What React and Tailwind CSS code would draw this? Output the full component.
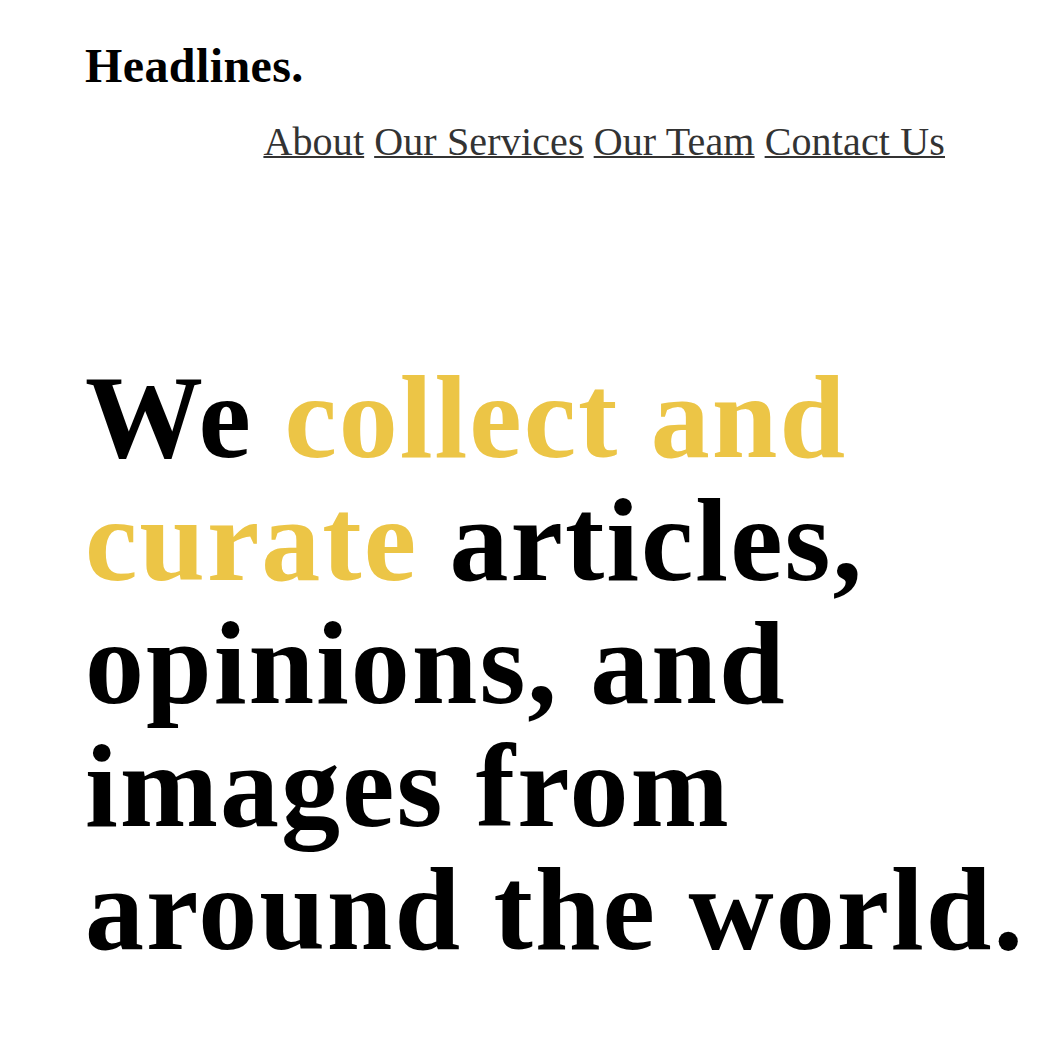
export default function App() {
  const serif = { fontFamily: '"Liberation Serif", "Times New Roman", serif' };
  return (
    <div className="min-h-[1046px] bg-white" style={serif}>
      <header className="pl-[85px] pr-[103px] pt-[42px]">
        <div className="text-[48px] leading-[48px] font-bold tracking-[0.4px] text-black">Headlines.</div>
        <nav className="mt-[28px] flex justify-end gap-[10px] text-[40px] leading-[48px] tracking-[0.15px] text-[#333]">
          <a href="#" className="underline decoration-2">About</a>
          <a href="#" className="underline decoration-2">Our Services</a>
          <a href="#" className="underline decoration-2">Our Team</a>
          <a href="#" className="underline decoration-2">Contact Us</a>
        </nav>
      </header>
      <h1 className="pl-[85px] pt-[190px] text-[118px] leading-[123px] font-bold tracking-[2px] text-black">
        <span className="block">We <span className="text-[#ecc546]">collect and</span></span>
        <span className="block"><span className="text-[#ecc546]">curate</span> articles,</span>
        <span className="block">opinions, and</span>
        <span className="block">images from</span>
        <span className="block whitespace-nowrap">around the world.</span>
      </h1>
    </div>
  );
}
